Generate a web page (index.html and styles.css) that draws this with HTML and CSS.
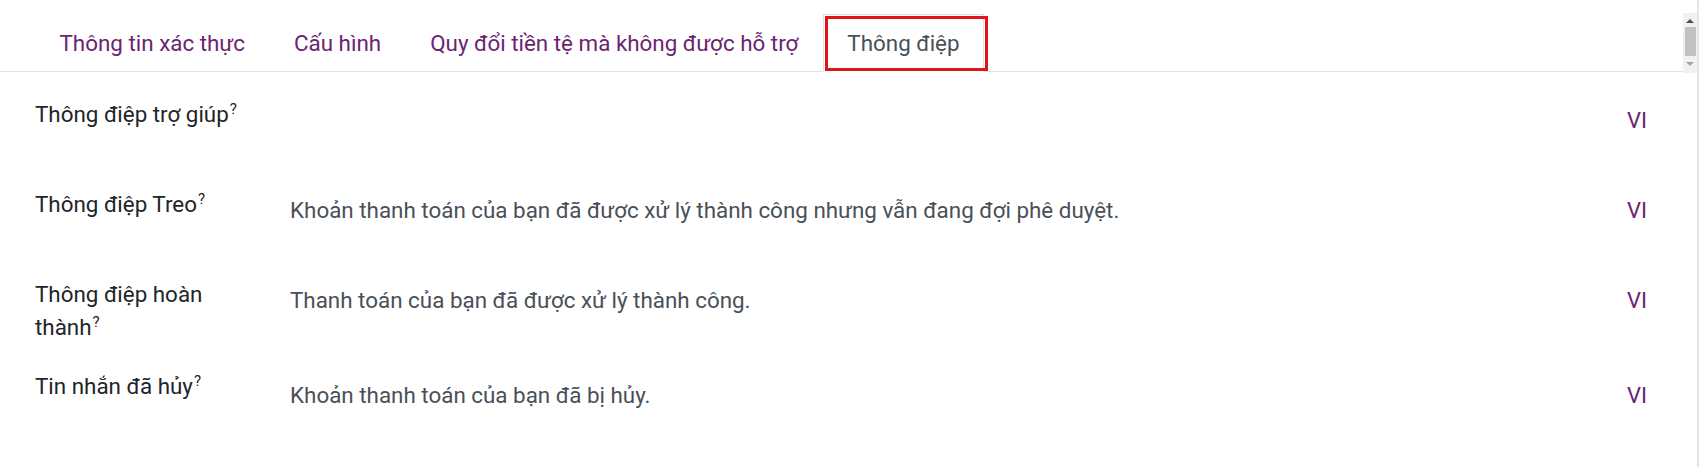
FILE: index.html
```html
<!DOCTYPE html>
<html lang="vi">
<head>
    <meta charset="UTF-8">
    <meta name="viewport" content="width=device-width, initial-scale=1.0">
    <title>Thông điệp</title>
    <link rel="stylesheet" href="styles.css">
</head>
<body>
    <div class="page">
        <div class="notebook-head">
            <ul class="nav-tabs">
                <li><a class="nav-link" href="#">Thông tin xác thực</a></li>
                <li><a class="nav-link" href="#">Cấu hình</a></li>
                <li><a class="nav-link" href="#">Quy đổi tiền tệ mà không được hỗ trợ</a></li>
                <li class="active-item">
                    <a class="nav-link active" href="#">Thông điệp</a>
                    <span class="highlight"></span>
                </li>
            </ul>
            <div class="scrollbar">
                <span class="arrow up"></span>
                <span class="thumb"></span>
                <span class="arrow down"></span>
            </div>
        </div>

        <div class="fields">
            <div class="field-label">Thông điệp trợ giúp<sup>?</sup></div>
            <div class="field-value">
                <span class="html-text"></span>
                <a class="lang" href="#">VI</a>
            </div>

            <div class="field-label">Thông điệp Treo<sup>?</sup></div>
            <div class="field-value">
                <span class="html-text">Khoản thanh toán của bạn đã được xử lý thành công nhưng vẫn đang đợi phê duyệt.</span>
                <a class="lang" href="#">VI</a>
            </div>

            <div class="field-label">Thông điệp hoàn thành<sup>?</sup></div>
            <div class="field-value">
                <span class="html-text">Thanh toán của bạn đã được xử lý thành công.</span>
                <a class="lang" href="#">VI</a>
            </div>

            <div class="field-label">Tin nhắn đã hủy<sup>?</sup></div>
            <div class="field-value last">
                <span class="html-text">Khoản thanh toán của bạn đã bị hủy.</span>
                <a class="lang" href="#">VI</a>
            </div>
        </div>
    </div>
</body>
</html>
```

FILE: styles.css
```css
html, body {
    margin: 0;
    height: 100%;
    background-color: white;
}
body {
    font-family: Roboto, "Noto Sans", sans-serif;
    font-size: 22.4px;
    color: #212529;
}
.page {
    min-height: 100%;
    margin-right: 2px;
    border-right: 2px solid #e3e4ec;
    box-sizing: border-box;
}
a {
    text-decoration: none;
}

/* tab strip */
.notebook-head {
    display: flex;
    align-items: flex-start;
}
.nav-tabs {
    flex: 1;
    display: flex;
    list-style: none;
    margin: 0;
    padding: 14px 0 0 35px;
    border-bottom: 1px solid #dee2e6;
}
.nav-tabs li {
    margin-bottom: -1px;
}
.nav-link {
    display: block;
    padding: 12px 23.5px;
    line-height: 32px;
    font-size: 22.4px;
    color: #6b2470;
    border: 1px solid transparent;
}
.nav-link.active {
    color: #495057;
    background-color: white;
    border-color: #dee2e6 #dee2e6 white;
}
.active-item {
    position: relative;
}
.highlight {
    position: absolute;
    top: 2px;
    left: 2px;
    right: -4px;
    bottom: 1px;
    border: 3px solid #e0141b;
    pointer-events: none;
}

/* small scrollbar next to the tabs */
.scrollbar {
    width: 14px;
    height: 60px;
    margin-top: 13px;
    background-color: #f1f1f1;
    display: flex;
    flex-direction: column;
    align-items: center;
}
.scrollbar .arrow {
    width: 0;
    height: 0;
    border-left: 4px solid transparent;
    border-right: 4px solid transparent;
}
.scrollbar .up {
    margin-top: 6px;
    border-bottom: 4px solid #505050;
}
.scrollbar .down {
    margin-top: 6px;
    border-top: 4px solid #a3a3a3;
}
.scrollbar .thumb {
    width: 11px;
    height: 29px;
    margin-top: 4px;
    background-color: #c1c1c1;
}

/* message fields */
.fields {
    display: grid;
    grid-template-columns: 220px 1fr;
    column-gap: 35px;
    padding: 25px 50px 0 35px;
}
.field-label {
    line-height: 33px;
    padding-bottom: 26px;
    color: #212529;
}
.field-label sup {
    font-size: 15px;
    line-height: 0;
    vertical-align: 8px;
    margin-left: 1px;
}
.field-value {
    display: flex;
    align-items: flex-start;
    justify-content: space-between;
    min-height: 90px;
    padding-top: 6px;
    box-sizing: border-box;
    line-height: 33px;
}
.field-value.last {
    padding-top: 9px;
}
.html-text {
    color: #495057;
}
.lang {
    color: #6b2470;
    font-size: 22px;
}
```
